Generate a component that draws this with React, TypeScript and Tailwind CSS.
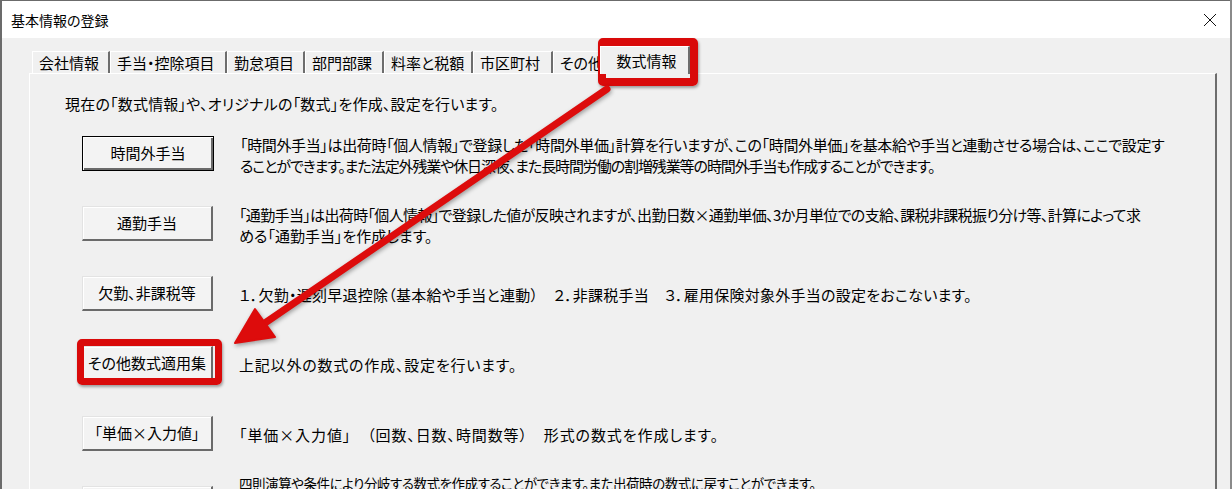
import React from 'react';

const TABS = [
  { label: '会社情報', w: 'w-[78px]' },
  { label: '手当・控除項目', w: 'w-[117px]' },
  { label: '勤怠項目', w: 'w-[78px]' },
  { label: '部門部課', w: 'w-[79px]' },
  { label: '料率と税額', w: 'w-[89px]' },
  { label: '市区町村', w: 'w-[80px]' },
  { label: 'その他', w: 'w-[47px]' },
];

// per-line tracking roughly evens out the Meiryo UI widths of the original
const ROWS = [
  {
    button: '時間外手当',
    isDefault: true,
    lines: [
      {
        t: '「時間外手当」は出荷時「個人情報」で登録した「時間外単価」計算を行いますが、この「時間外単価」を基本給や手当と連動させる場合は、ここで設定す',
        cls: 'tracking-[-0.35px]',
      },
      {
        t: 'ることができます。また法定外残業や休日深夜、また長時間労働の割増残業等の時間外手当も作成することができます。',
        cls: 'tracking-[-1.1px]',
      },
    ],
  },
  {
    button: '通勤手当',
    lines: [
      {
        t: '「通勤手当」は出荷時「個人情報」で登録した値が反映されますが、出勤日数×通勤単価、3か月単位での支給、課税非課税振り分け等、計算によって求',
        cls: 'tracking-[-0.65px]',
      },
      { t: 'める「通勤手当」を作成します。', cls: '' },
    ],
  },
  {
    button: '欠勤、非課税等',
    lines: [
      {
        t: '１．欠勤・遅刻早退控除（基本給や手当と連動）　２．非課税手当　３．雇用保険対象外手当の設定をおこないます。',
        cls: 'tracking-[0.25px]',
      },
    ],
  },
  {
    button: 'その他数式適用集',
    lines: [{ t: '上記以外の数式の作成、設定を行います。', cls: 'tracking-[0.8px]' }],
  },
  {
    button: '「単価×入力値」',
    lines: [{ t: '「単価×入力値」　（回数、日数、時間数等）　形式の数式を作成します。', cls: 'tracking-[0.9px]' }],
  },
];

function WinButton({ label, isDefault }: { label: string; isDefault?: boolean }) {
  if (isDefault) {
    return (
      <div className="flex h-[35px] w-[132px] shrink-0 items-center justify-center border border-black bg-[#f3f3f3] shadow-[inset_1px_1px_0_#ffffff,inset_-2px_-2px_0_#6a6a6a] text-[15px]">
        {label}
      </div>
    );
  }
  return (
    <div className="flex h-[35px] w-[131px] shrink-0 items-center justify-center border-t border-l border-[#e3e3e3] border-r-2 border-b-2 border-r-[#6a6a6a] border-b-[#6a6a6a] bg-[#f3f3f3] shadow-[inset_1px_1px_0_#ffffff] text-[15px]">
      {label}
    </div>
  );
}

export default function App() {
  return (
    <div className="relative h-[489px] w-[1232px] overflow-hidden border-l-2 border-r-2 border-l-[#6b6b6b] border-r-[#8a8a8a] bg-[#f0f0f0] font-['Noto_Sans_CJK_JP',sans-serif] text-black [font-feature-settings:'palt']">
      {/* Title bar */}
      <div className="flex h-[38px] items-center justify-between border-t border-[#6b6b6b] bg-white pl-[9px] pr-[13px]">
        <span className="text-[14px] leading-none">基本情報の登録</span>
        <svg width="14" height="14" viewBox="0 0 14 14" aria-label="close">
          <path d="M1 1 L13 13 M13 1 L1 13" stroke="#111" strokeWidth="1" fill="none" />
        </svg>
      </div>

      {/* Tab strip */}
      <div className="flex items-end pl-[30px] pt-[8px]">
        {TABS.map((t) => (
          <div
            key={t.label}
            className={`${t.w} flex h-[22px] shrink-0 items-center whitespace-nowrap border-l border-t border-white border-r-2 border-r-[#6d6d6d] pl-[6px] text-[15px] leading-none`}
          >
            {t.label}
          </div>
        ))}
        <div className="relative z-10 -mb-px flex h-[28px] w-[90px] shrink-0 items-center justify-center border-l border-t border-white border-r-2 border-r-[#6d6d6d] bg-[#f0f0f0] pl-[4px] text-[15px] leading-none">
          数式情報
        </div>
      </div>

      {/* Tab panel */}
      <div className="ml-[27px] h-[420px] w-[1188px] border-l border-t border-white border-r-2 border-r-[#6d6d6d]">
        <p className="pl-[35px] pt-[19px] text-[15px] leading-[21px] tracking-[0.2px]">
          現在の「数式情報」や、オリジナルの「数式」を作成、設定を行います。
        </p>
        <div className="mt-[22px] flex flex-col gap-[35px] pl-[52px]">
          {ROWS.map((r) => (
            <div key={r.button} className="flex h-[35px] items-center gap-[26px]">
              <WinButton label={r.button} isDefault={r.isDefault} />
              <p className="whitespace-nowrap pt-[2px] text-[15px] leading-[21px]">
                {r.lines.map((l, i) => (
                  <span key={i} className={`block ${l.cls}`}>
                    {l.t}
                  </span>
                ))}
              </p>
            </div>
          ))}
          <div className="flex h-[35px] items-start gap-[26px]">
            <WinButton label="" />
            <p className="-mt-[13px] whitespace-nowrap text-[13.5px] leading-[21px] tracking-[-0.45px]">
              四則演算や条件により分岐する数式を作成することができます。また出荷時の数式に戻すことができます。
            </p>
          </div>
        </div>
      </div>

      {/* Red highlight boxes */}
      <div className="pointer-events-none absolute left-[596px] top-[38px] h-[48px] w-[100px] rounded-[5px] border-[8px] border-[#d90a0a] shadow-[1px_2px_3px_rgba(0,0,0,0.35)]" />
      <div className="pointer-events-none absolute left-[75px] top-[339px] h-[46px] w-[145px] rounded-[5px] border-[7px] border-[#d90a0a] shadow-[1px_2px_3px_rgba(0,0,0,0.35)]" />

      {/* Arrow */}
      <svg
        className="pointer-events-none absolute left-[-2px] top-0 drop-shadow-[1px_2px_2px_rgba(0,0,0,0.35)]"
        width="1232"
        height="489"
        viewBox="0 0 1232 489"
      >
        <line x1="607" y1="89" x2="262" y2="325" stroke="#dd0c0c" strokeWidth="7" strokeLinecap="round" />
        <polygon points="235,343 255,309 275,337" fill="#dd0c0c" stroke="#dd0c0c" strokeWidth="2" strokeLinejoin="round" />
      </svg>
    </div>
  );
}
